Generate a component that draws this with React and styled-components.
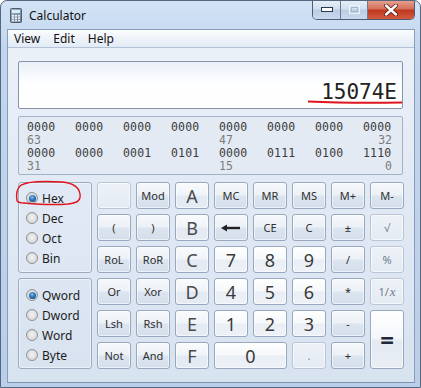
import React from 'react';
import styled, { createGlobalStyle, css } from 'styled-components';

const GlobalStyle = createGlobalStyle`
  html, body {
    margin: 0;
    padding: 0;
    background: #fff;
  }
  body {
    font-family: "Noto Sans", "Open Sans", sans-serif;
  }
  * {
    box-sizing: border-box;
  }
`;

const Window = styled.div`
  position: relative;
  width: 421px;
  height: 388px;
  border: 1px solid #55677f;
  border-radius: 7px 7px 0 0;
  background: linear-gradient(180deg, #d3e3f5 0%, #c1d6ee 12%, #b9cfe9 100%);
  padding: 0 5px 4px 6px;
  display: flex;
  flex-direction: column;
  overflow: hidden;
`;

const TitleBar = styled.div`
  height: 28px;
  display: flex;
  align-items: center;
`;

const TitleText = styled.span`
  margin-left: 7px;
  font-size: 12px;
  color: #111;
  margin-top: 1px;
`;

const Controls = styled.div`
  margin-left: auto;
  align-self: flex-start;
  margin-top: -1px;
  display: flex;
  height: 20px;
  border: 1px solid #4e5d72;
  border-top: none;
  border-radius: 0 0 5px 5px;
  overflow: hidden;
`;

const CtrlButton = styled.div`
  width: ${(p) => p.$w}px;
  height: 100%;
  display: flex;
  align-items: center;
  justify-content: center;
  border-left: ${(p) => (p.$first ? 'none' : '1px solid #6b7c93')};
  background: ${(p) =>
    p.$close
      ? 'linear-gradient(180deg, #e9a595 0%, #d4725d 45%, #c0391f 55%, #d25a3f 100%)'
      : 'linear-gradient(180deg, #e8f0f9 0%, #d3e0f0 45%, #bccde4 55%, #c9d9ee 100%)'};
`;

const MenuBar = styled.div`
  height: 18px;
  display: flex;
  align-items: center;
  gap: 13px;
  padding-left: 6px;
  background: linear-gradient(180deg, #fbfcfe 0%, #eef3f9 50%, #e2eaf5 100%);
  border-bottom: 1px solid #b3c2d6;
  font-size: 12px;
  color: #111;
`;

const Client = styled.div`
  flex: 1;
  display: flex;
  flex-direction: column;
  border: 1px solid #8a9db8;
  border-bottom: 1px solid #7f93ae;
  background: linear-gradient(180deg, #edf2f9 0%, #e1e9f4 45%, #d8e3f0 100%);
`;

const Body = styled.div`
  flex: 1;
  display: flex;
  flex-direction: column;
  gap: 7px;
  padding: 13px 11px 13px 10px;
`;

const Display = styled.div`
  height: 48px;
  border: 1px solid #8594aa;
  border-radius: 2px;
  background: linear-gradient(180deg, #eaf0f7 0%, #fdfeff 45%, #ffffff 100%);
  display: flex;
  align-items: flex-end;
  justify-content: flex-end;
  padding: 0 5px 4px 0;
  font-family: "DejaVu Sans Mono", "Liberation Mono", monospace;
  font-size: 21px;
  line-height: 24px;
  color: #222;
`;

const BitPanel = styled.div`
  height: 59px;
  border: 1px solid #a3b2c6;
  border-radius: 2px;
  background: #e3eaf4;
  padding: 4px 10px 0 8px;
  display: grid;
  grid-template-columns: repeat(7, 48px) auto;
  grid-auto-rows: 13px;
  font-family: "DejaVu Sans Mono", "Liberation Mono", monospace;
  font-size: 11.5px;
  line-height: 13px;
`;

const Bits = styled.span`
  color: #3c3c3c;
  letter-spacing: 0.2px;
`;

const BitLabel = styled.span`
  color: #7c7c7c;
  justify-self: ${(p) => (p.$end ? 'end' : 'start')};
`;

const Keypad = styled.div`
  display: grid;
  grid-template-columns: 74px repeat(8, 34px);
  grid-template-rows: repeat(6, 27px);
  column-gap: 5px;
  row-gap: 5px;
`;

const GroupBox = styled.div`
  grid-column: 1;
  grid-row: span 3;
  border: 1px solid #9dabc0;
  border-radius: 3px;
  box-shadow: inset 0 0 0 1px rgba(255, 255, 255, 0.45);
  padding: ${(p) => (p.$top ? 5 : 6)}px 0 0 7px;
  display: flex;
  flex-direction: column;
`;

const RadioRow = styled.label`
  height: 20px;
  display: flex;
  align-items: center;
  gap: 4px;
  font-size: 12px;
  color: #1b1b1b;
`;

const RadioDot = styled.span`
  width: 12px;
  height: 12px;
  border-radius: 50%;
  border: 1px solid #8d9197;
  background: radial-gradient(circle at 50% 45%, #f4f4f4 0%, #dedede 55%, #c9cbce 100%);
  display: flex;
  align-items: center;
  justify-content: center;

  ${(p) =>
    p.$on &&
    css`
      &::after {
        content: '';
        width: 7px;
        height: 7px;
        border-radius: 50%;
        background: radial-gradient(circle at 45% 35%, #7ec2f2 0%, #2a74b8 45%, #0d3a6a 100%);
      }
    `}
`;

const kinds = {
  op: css`
    background: linear-gradient(180deg, #f5f8fb 0%, #ecf1f7 47%, #dbe4ef 53%, #d5dfeb 100%);
    border-color: #98a9bf;
    color: #2f2f2f;
    font-size: 11px;
  `,
  num: css`
    background: linear-gradient(180deg, #ffffff 0%, #f6f8fb 47%, #e9eef5 53%, #eef2f8 100%);
    border-color: #98a9bf;
    color: #3a3a3a;
    font-size: 18px;
  `,
  hex: css`
    background: linear-gradient(180deg, #f9fbfd 0%, #f0f4f9 47%, #e2e9f2 53%, #e6ecf4 100%);
    border-color: #98a9bf;
    color: #4a4a4a;
    font-size: 18px;
  `,
  dis: css`
    background: linear-gradient(180deg, #edf2f8 0%, #e4eaf3 100%);
    border-color: #bac6d6;
    color: #707c8c;
    font-size: 11px;
  `,
  eq: css`
    background: linear-gradient(180deg, #ffffff 0%, #f4f7fb 47%, #e4eaf2 53%, #e9eef5 100%);
    border-color: #98a9bf;
    color: #1e2a3c;
    font-size: 24px;
    font-weight: 700;
  `,
};

const Key = styled.button`
  all: unset;
  box-sizing: border-box;
  display: flex;
  align-items: center;
  justify-content: center;
  border: 1px solid;
  border-radius: 3px;
  box-shadow: inset 0 0 0 1px rgba(255, 255, 255, 0.55);
  font-family: "Noto Sans", "Open Sans", sans-serif;
  line-height: 1;
  grid-column: ${(p) => p.$col || 'auto'};
  grid-row: ${(p) => p.$row || 'auto'};
  ${(p) => kinds[p.$kind || 'op']}
`;

const Italic = styled.i`
  font-family: "Liberation Serif", "DejaVu Serif", serif;
  font-size: 13px;
  margin-left: 1px;
`;

const Annotations = styled.svg`
  position: absolute;
  left: -1px;
  top: -1px;
  pointer-events: none;
`;

const CalcIcon = () => (
  <svg width="12" height="15" viewBox="0 0 12 15" style={{ marginLeft: 3 }}>
    <defs>
      <linearGradient id="ci" x1="0" y1="0" x2="1" y2="1">
        <stop offset="0" stopColor="#a9b9cc" />
        <stop offset="1" stopColor="#62768f" />
      </linearGradient>
    </defs>
    <rect x="0.5" y="0.5" width="11" height="14" rx="1" fill="url(#ci)" stroke="#4d5d72" />
    <rect x="2" y="2" width="8" height="3" fill="#d9ecf8" />
    {[0, 1, 2].map((r) =>
      [0, 1, 2].map((c) => (
        <rect key={`${r}${c}`} x={2 + c * 3} y={7 + r * 2.4} width="2" height="1.6" fill="#eef3f8" />
      ))
    )}
  </svg>
);

const BackArrow = () => (
  <svg width="20" height="8" viewBox="0 0 20 8">
    <rect x="5" y="2.8" width="14" height="2.4" fill="#222" />
    <polygon points="0,4 6,0.5 6,7.5" fill="#222" />
  </svg>
);

const bitRows = [
  ['0000', '0000', '0000', '0000', '0000', '0000', '0000', '0000'],
  ['0000', '0000', '0001', '0101', '0000', '0111', '0100', '1110'],
];
const bitLabels = [
  ['63', '47', '32'],
  ['31', '15', '0'],
];

const keys = [
  { k: 'dis', t: '' }, { t: 'Mod' }, { k: 'hex', t: 'A' }, { t: 'MC' }, { t: 'MR' }, { t: 'MS' }, { t: 'M+' }, { t: 'M-' },
  { t: '(' }, { t: ')' }, { k: 'hex', t: 'B' }, { t: 'back' }, { t: 'CE' }, { t: 'C' }, { t: '±' }, { k: 'dis', t: '√' },
  { t: 'RoL' }, { t: 'RoR' }, { k: 'hex', t: 'C' }, { k: 'num', t: '7' }, { k: 'num', t: '8' }, { k: 'num', t: '9' }, { t: '/' }, { k: 'dis', t: '%' },
  { t: 'Or' }, { t: 'Xor' }, { k: 'hex', t: 'D' }, { k: 'num', t: '4' }, { k: 'num', t: '5' }, { k: 'num', t: '6' }, { t: '*' }, { k: 'dis', t: 'inv' },
  { t: 'Lsh' }, { t: 'Rsh' }, { k: 'hex', t: 'E' }, { k: 'num', t: '1' }, { k: 'num', t: '2' }, { k: 'num', t: '3' }, { t: '-' }, { k: 'eq', t: '=', row: 'span 2' },
  { t: 'Not' }, { t: 'And' }, { k: 'hex', t: 'F' }, { k: 'num', t: '0', col: 'span 2' }, { k: 'dis', t: '.' }, { t: '+' },
];

const Radio = ({ label, on }) => (
  <RadioRow>
    <RadioDot $on={on} />
    {label}
  </RadioRow>
);

const keyContent = (t) => {
  if (t === 'back') return <BackArrow />;
  if (t === 'inv') return (<span>1/<Italic>x</Italic></span>);
  return t;
};

const App = () => {
  return (
    <>
      <GlobalStyle />
      <Window>
        <TitleBar>
          <CalcIcon />
          <TitleText>Calculator</TitleText>
          <Controls>
            <CtrlButton $w={27} $first>
              <svg width="12" height="5" viewBox="0 0 12 5">
                <rect x="0.5" y="0.5" width="11" height="4" fill="#fff" stroke="#2c3a4d" />
              </svg>
            </CtrlButton>
            <CtrlButton $w={27}>
              <svg width="11" height="9" viewBox="0 0 11 9">
                <rect x="0.5" y="0.5" width="10" height="8" fill="none" stroke="#eef3f9" />
                <rect x="2.5" y="2.5" width="6" height="4" fill="none" stroke="#a8b8cc" />
              </svg>
            </CtrlButton>
            <CtrlButton $w={47} $close>
              <svg width="14" height="12" viewBox="0 0 14 12">
                <path d="M2 1.5 L12 10.5 M12 1.5 L2 10.5" stroke="#5a1a10" strokeWidth="4" strokeLinecap="round" />
                <path d="M2 1.5 L12 10.5 M12 1.5 L2 10.5" stroke="#fff" strokeWidth="2.4" strokeLinecap="round" />
              </svg>
            </CtrlButton>
          </Controls>
        </TitleBar>

        <Client>
          <MenuBar>
            <span>View</span>
            <span>Edit</span>
            <span>Help</span>
          </MenuBar>

          <Body>
            <Display>15074E</Display>

            <BitPanel>
              {bitRows.map((row, ri) => (
                <React.Fragment key={ri}>
                  {row.map((b, i) => (
                    <Bits key={i}>{b}</Bits>
                  ))}
                  <BitLabel style={{ gridColumn: 1 }}>{bitLabels[ri][0]}</BitLabel>
                  <BitLabel style={{ gridColumn: 5 }}>{bitLabels[ri][1]}</BitLabel>
                  <BitLabel style={{ gridColumn: 8 }} $end>{bitLabels[ri][2]}</BitLabel>
                </React.Fragment>
              ))}
            </BitPanel>

            <Keypad>
              <GroupBox $top style={{ gridRow: '1 / span 3' }}>
                <Radio label="Hex" on />
                <Radio label="Dec" />
                <Radio label="Oct" />
                <Radio label="Bin" />
              </GroupBox>
              {keys.slice(0, 24).map((key, i) => (
                <Key key={i} $kind={key.k} $col={key.col} $row={key.row}>
                  {keyContent(key.t)}
                </Key>
              ))}
              <GroupBox style={{ gridRow: '4 / span 3' }}>
                <Radio label="Qword" on />
                <Radio label="Dword" />
                <Radio label="Word" />
                <Radio label="Byte" />
              </GroupBox>
              {keys.slice(24).map((key, i) => (
                <Key key={i} $kind={key.k} $col={key.col} $row={key.row}>
                  {keyContent(key.t)}
                </Key>
              ))}
            </Keypad>
          </Body>
        </Client>

        <Annotations width="421" height="388" viewBox="0 0 421 388">
          <path
            d="M17 201 C16 195 17 189 20 186 C26 181 45 181 62 182 C72 183 79 187 80 194 C81 200 78 203 68 204 C55 205 35 204 24 203 C20 203 18 202 17 201"
            fill="none"
            stroke="#e0141c"
            strokeWidth="1.4"
          />
          <path d="M308 101.5 C330 102.5 370 103 402 102.5" fill="none" stroke="#e0141c" strokeWidth="2" />
        </Annotations>
      </Window>
    </>
  );
};

export default App;
